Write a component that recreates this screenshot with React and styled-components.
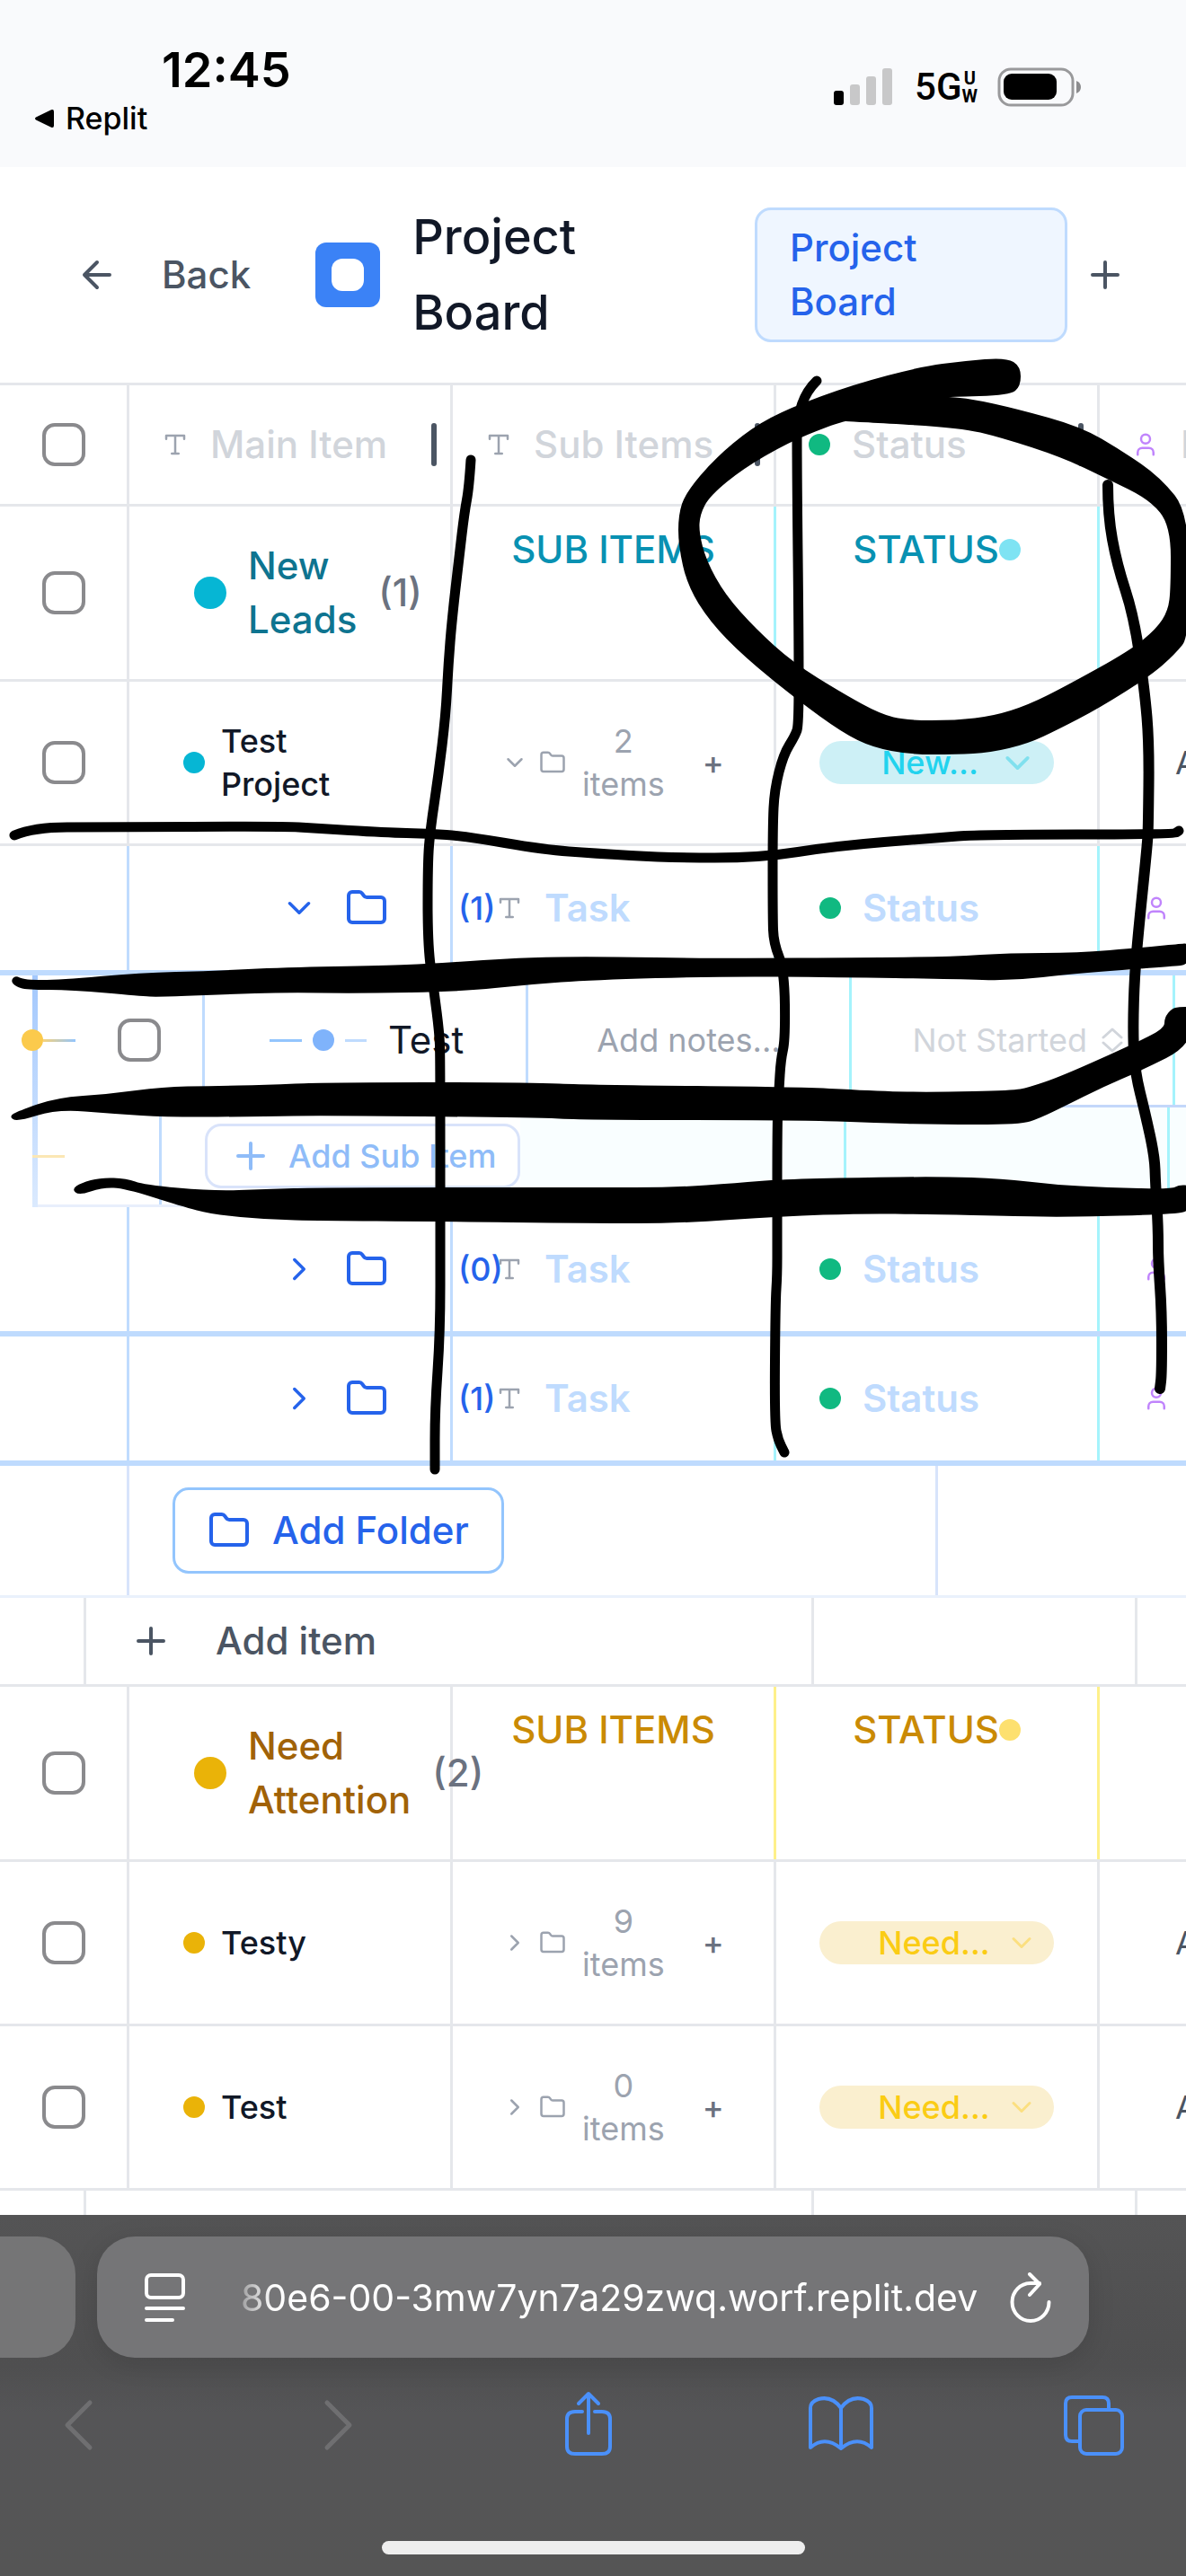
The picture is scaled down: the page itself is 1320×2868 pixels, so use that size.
import React from "react";
import styled, { createGlobalStyle } from "styled-components";

const GlobalStyle = createGlobalStyle`
  * { box-sizing: border-box; }
  body { margin: 0; background: #fff; font-family: Inter, "Liberation Sans", sans-serif; }
  button, input, select { font-family: inherit; }
`;

const c = {
  ink: "#111827",
  slate: "#4b5563",
  gray: "#6b7280",
  muted: "#9ca3af",
  pale: "#d1d5db",
  line: "#e5e7eb",
  blue: "#2563eb",
  sky: "#bfdbfe",
  cyan: "#a5f3fc",
};

const groups = {
  cyan: { name: "#0e7490", label: "#0891b2", dot: "#06b6d4", soft: "#7ee3f3", line: "#a5f3fc", pill: "#cdf0f6", pillText: "#22d3ee", caret: "#80e0ee" },
  gold: { name: "#a16207", label: "#ca8a04", dot: "#eab308", soft: "#fde06f", line: "#fef08a", pill: "#faefcf", pillText: "#facc15", caret: "#fbdf80" },
};

/* ---------- shell ---------- */

const Screen = styled.div`
  position: relative;
  display: flex;
  flex-direction: column;
  height: 100vh;
  overflow: hidden;
  background: #fff;
`;

const StatusBar = styled.div`
  display: flex;
  justify-content: space-between;
  align-items: flex-start;
  padding: 48px 116px 30px 38px;
  background: #f9fafc;
  color: #000;
`;

const ClockColumn = styled.div`
  display: flex;
  flex-direction: column;
`;

const Clock = styled.time`
  margin-left: 142px;
  font-size: 54px;
  font-weight: 600;
  line-height: 60px;
`;

const ReturnLink = styled.a`
  display: flex;
  align-items: center;
  gap: 12px;
  color: inherit;
  font-size: 34px;
  font-weight: 500;
  line-height: 48px;
  text-decoration: none;
`;

const Indicators = styled.div`
  display: flex;
  align-items: center;
  height: 44px;
  margin-top: 27px;
`;

const Network = styled.span`
  display: flex;
  align-items: center;
  margin: 0 22px 0 24px;
  font-family: Roboto, sans-serif;
  font-size: 42px;
  font-weight: 500;
  line-height: 44px;
`;

const NetworkTag = styled.span`
  display: flex;
  flex-direction: column;
  align-items: center;
  font-size: 20px;
  font-weight: 700;
  line-height: 20px;
`;

const Header = styled.header`
  display: flex;
  align-items: center;
  padding: 45px 66px 45px 84px;
  border-bottom: 3px solid ${c.line};
`;

const BackButton = styled.button`
  display: flex;
  align-items: center;
  gap: 48px;
  margin-right: 72px;
  padding: 0;
  border: 0;
  background: none;
  color: ${c.slate};
  font-size: 42px;
  font-weight: 500;
  line-height: 60px;
`;

const BoardBadge = styled.span`
  display: grid;
  place-items: center;
  width: 72px;
  height: 72px;
  border-radius: 12px;
  background: #3b82f6;
  &::after {
    content: "";
    width: 36px;
    height: 36px;
    border-radius: 12px;
    background: #fff;
  }
`;

const Title = styled.h1`
  width: min-content;
  margin: -9px auto -9px 36px;
  color: ${c.ink};
  font-size: 54px;
  font-weight: 500;
  line-height: 84px;
`;

const BoardTab = styled.button`
  flex: 0 0 348px;
  margin-right: 18px;
  padding: 12px 36px;
  border: 3px solid ${c.sky};
  border-radius: 18px;
  background: #eff6ff;
  color: ${c.blue};
  font-size: 42px;
  font-weight: 500;
  line-height: 60px;
  text-align: left;
`;

const Wrapped = styled.span`
  display: block;
  width: min-content;
`;

const IconButton = styled.button`
  display: grid;
  place-items: center;
  padding: 0;
  border: 0;
  background: none;
  color: ${(p) => p.$color || c.slate};
`;

/* ---------- table ---------- */

const Scroller = styled.main`
  flex: 1;
  min-height: 0;
  overflow: hidden;
`;

const Table = styled.table`
  display: block;
  width: max-content;
  min-width: 100%;
  border-spacing: 0;
  font-size: 42px;
  font-weight: 500;
  line-height: 60px;
`;

const Body = styled.tbody`
  display: block;
`;

const Row = styled.tr`
  display: flex;
  height: ${(p) => p.$height}px;
  margin-left: ${(p) => p.$indent || 0}px;
  border-bottom: ${(p) => p.$weight || 3}px solid ${(p) => p.$line || c.line};
`;

const Cell = styled.td`
  display: flex;
  flex: 0 0 ${(p) => p.$width || 360}px;
  min-width: 0;
  align-items: ${(p) => p.$align || "center"};
  justify-content: ${(p) => p.$justify || "flex-start"};
  gap: ${(p) => p.$gap || 0}px;
  padding: ${(p) => p.$pad || "0"};
  border-right: 3px solid ${(p) => p.$line || c.line};
  background: ${(p) => p.$tint || "transparent"};
  color: ${(p) => p.$color || "inherit"};
  white-space: nowrap;
`;

const HeadCell = styled(Cell).attrs({ as: "th", scope: "col" })`
  position: relative;
  font-weight: 500;
`;

const ResizeGrip = styled.span`
  position: absolute;
  top: 42px;
  right: 15px;
  width: 6px;
  height: 48px;
  border-radius: 3px;
  background: ${c.slate};
`;

const Checkbox = styled.input.attrs({ type: "checkbox" })`
  appearance: none;
  width: 48px;
  height: 48px;
  margin: 0;
  border: 4px solid #8a8a8d;
  border-radius: 14px;
  background: #fff;
`;

const Dot = styled.span`
  flex: none;
  width: ${(p) => p.$size || 24}px;
  height: ${(p) => p.$size || 24}px;
  border-radius: 50%;
  background: ${(p) => p.$color};
`;

const DotSlot = styled.span`
  display: flex;
  align-items: center;
  height: 60px;
`;

const GroupName = styled.span`
  width: min-content;
  white-space: normal;
  color: ${(p) => p.$color};
`;

const ItemName = styled(GroupName)`
  font-size: 36px;
  line-height: 48px;
`;

const GroupCount = styled.span`
  color: ${c.gray};
`;

const FolderGap = styled.span`
  flex: 0 0 30px;
`;

const FolderCount = styled.span`
  flex: none;
  margin-left: 78px;
  font-size: 36px;
  line-height: 48px;
`;

const FolderHead = styled.span`
  font-weight: 600;
`;

const ItemCount = styled.span`
  width: min-content;
  margin: 0 30px 0 6px;
  color: ${c.muted};
  font-size: 36px;
  font-weight: 400;
  line-height: 48px;
  text-align: center;
  white-space: normal;
`;

const PlainButton = styled.button`
  padding: 0;
  border: 0;
  background: none;
  color: ${c.gray};
  font-size: 36px;
  font-weight: 500;
  line-height: 48px;
`;

const Pill = styled.label`
  display: flex;
  flex: 1;
  align-items: center;
  height: 48px;
  padding: 0 18px 0 48px;
  border-radius: 24px;
  background: ${(p) => p.$tone.pill};
  color: ${(p) => p.$tone.caret};
`;

const PillSelect = styled.select`
  appearance: none;
  flex: 1;
  min-width: 0;
  padding: 0;
  border: 0;
  background: none;
  color: ${(p) => p.$color};
  font-size: 36px;
  font-weight: 500;
  line-height: 48px;
  text-align: center;
`;

const StateLabel = styled.label`
  display: flex;
  align-items: center;
  gap: 15px;
  margin-left: 12px;
  color: ${c.pale};
`;

const StateSelect = styled.select`
  appearance: none;
  padding: 0;
  border: 0;
  background: none;
  color: inherit;
  font-size: 36px;
  line-height: 48px;
`;

const NotesInput = styled.input`
  width: 100%;
  padding: 0;
  border: 0;
  background: none;
  font-size: 36px;
  line-height: 48px;
  text-align: center;
  &::placeholder { color: ${c.muted}; opacity: 1; }
`;

const Assignee = styled.span`
  color: ${c.slate};
  font-size: 36px;
  font-weight: 400;
`;

const SubRows = styled(Body)`
  position: relative;
`;

const GuideLine = styled.tr`
  position: absolute;
  top: 0;
  left: 36px;
  width: 6px;
  height: 100%;
  background: linear-gradient(#a3c8fd, #dbeafe);
`;

const Marker = styled.span`
  position: absolute;
  top: ${(p) => p.$top}px;
  left: ${(p) => p.$left}px;
  display: flex;
  align-items: center;
`;

const Dash = styled.span`
  width: ${(p) => p.$width}px;
  height: 3px;
  background: ${(p) => p.$color};
`;

const SubTitle = styled.span`
  margin-left: 12px;
  color: ${c.ink};
  font-weight: 400;
`;

const OutlineButton = styled.button`
  display: flex;
  flex: none;
  align-items: center;
  gap: ${(p) => (p.$small ? 18 : 24)}px;
  height: ${(p) => (p.$small ? 72 : 96)}px;
  padding: 0 ${(p) => (p.$small ? 24 : 36)}px;
  border: 3px solid ${(p) => (p.$small ? "#d9e3fa" : "#93c5fd")};
  border-radius: 18px;
  background: #fff;
  color: ${(p) => (p.$small ? "#8fbcf8" : c.blue)};
  font-size: ${(p) => (p.$small ? 36 : 42)}px;
  font-weight: 500;
  line-height: 48px;
  white-space: nowrap;
`;

const AddItemButton = styled.button`
  display: flex;
  align-items: center;
  gap: 48px;
  padding: 0;
  border: 0;
  background: none;
  color: ${c.slate};
  font-size: 42px;
  font-weight: 500;
  line-height: 60px;
`;

/* ---------- browser chrome ---------- */

const BrowserBar = styled.footer`
  display: flex;
  flex-direction: column;
  padding: 24px 0;
  background: linear-gradient(#545455, #4f4f50 42%, #555557 55%, #555555);
  color: #fff;
`;

const AddressRow = styled.div`
  display: flex;
  gap: 24px;
  padding-right: 108px;
`;

const PreviousTab = styled.div`
  flex: 0 0 84px;
  border-radius: 0 42px 42px 0;
  background: #757576;
`;

const AddressBar = styled.form`
  display: flex;
  flex: 1;
  align-items: center;
  min-width: 0;
  height: 135px;
  padding: 0 42px 0 52px;
  border-radius: 42px;
  background: #757577;
  box-shadow: 0 6px 30px rgba(0, 0, 0, 0.12);
`;

const Address = styled.input`
  flex: 1;
  min-width: 0;
  margin: 0 30px 0 60px;
  padding: 0;
  border: 0;
  background: none;
  color: #fff;
  font-size: 41px;
  line-height: 60px;
  mask-image: linear-gradient(90deg, rgba(0, 0, 0, 0.3), #000 36px);
`;

const Toolbar = styled.nav`
  display: flex;
  justify-content: space-between;
  padding: 36px 63px 0 48px;
`;

const HomeIndicator = styled.div`
  width: 471px;
  height: 15px;
  margin: 90px auto 0;
  border-radius: 8px;
  background: #eee;
`;

const InkLayer = styled.svg`
  position: absolute;
  top: 0;
  left: 0;
  width: 100%;
  height: auto;
  pointer-events: none;
`;

/* ---------- icons ---------- */

const IconSvg = styled.svg`
  flex: none;
`;

const Icon = ({ size = 48, stroke = 2, box = "0 0 24 24", children, ...rest }) => (
  <IconSvg width={size} height={size} viewBox={box} fill="none" stroke="currentColor" strokeWidth={stroke} strokeLinecap="round" strokeLinejoin="round" aria-hidden="true" {...rest}>
    {children}
  </IconSvg>
);
const PlusIcon = () => <Icon><path d="M5 12h14M12 5v14" /></Icon>;
const FolderIcon = (p) => (
  <Icon {...p}><path d="M20 20a2 2 0 0 0 2-2V8a2 2 0 0 0-2-2h-7.9a2 2 0 0 1-1.69-.9L9.6 3.9A2 2 0 0 0 7.93 3H4a2 2 0 0 0-2 2v13a2 2 0 0 0 2 2Z" /></Icon>
);
const Chevron = ({ open, ...p }) => <Icon {...p}><path d={open ? "m6 9 6 6 6-6" : "m9 18 6-6-6-6"} /></Icon>;
const TypeIcon = () => <Icon size={30} color={c.muted}><path d="M4 7V4h16v3M9 20h6M12 4v16" /></Icon>;
const PersonIcon = () => (
  <Icon size={30} color="#c084fc"><path d="M19 21v-2a4 4 0 0 0-4-4H9a4 4 0 0 0-4 4v2" /><circle cx="12" cy="7" r="4" /></Icon>
);

/* ---------- pen strokes ---------- */

function smooth(flat, closed) {
  const pts = [];
  for (let i = 0; i < flat.length; i += 2) pts.push([flat[i], flat[i + 1]]);
  const mid = (a, b) => `${(a[0] + b[0]) / 2} ${(a[1] + b[1]) / 2}`;
  if (closed) {
    let d = `M${mid(pts[pts.length - 1], pts[0])}`;
    pts.forEach((p, i) => { d += `Q${p[0]} ${p[1]} ${mid(p, pts[(i + 1) % pts.length])}`; });
    return `${d}Z`;
  }
  let d = `M${pts[0][0]} ${pts[0][1]}`;
  for (let i = 1; i < pts.length - 1; i++) d += `Q${pts[i][0]} ${pts[i][1]} ${mid(pts[i], pts[i + 1])}`;
  const end = pts[pts.length - 1];
  return `${d}L${end[0]} ${end[1]}`;
}

const thinStrokes = [
  [524, 512, 522, 543, 517, 570, 511, 620, 503, 690, 499, 740, 496, 797, 488, 863, 479, 923, 476, 960, 476, 1053, 483, 1103, 489, 1150, 490, 1177, 490, 1380, 490, 1483, 484, 1570, 484, 1636],
  [909, 424, 887, 445, 887, 528, 889, 710, 889, 807, 885, 819, 872, 840, 862, 879, 860, 920, 860, 1020, 861, 1050, 873, 1080, 874, 1157, 869, 1180, 867, 1213, 865, 1247, 865, 1380, 865, 1420, 863, 1450, 862, 1583, 866, 1603, 873, 1617],
  [1233, 540, 1233, 573, 1243, 628, 1262, 686, 1274, 769, 1279, 828, 1278, 920, 1277, 940, 1266, 1047, 1262, 1100, 1261, 1160, 1264, 1197, 1274, 1237, 1285, 1287, 1286, 1317, 1289, 1367, 1289, 1403, 1293, 1460, 1293, 1530, 1291, 1546],
  [16, 930, 38, 921, 111, 921, 316, 920, 349, 922, 429, 927, 476, 928, 518, 931, 606, 946, 660, 950, 744, 955, 847, 955, 929, 942, 1039, 933, 1093, 929, 1306, 929, 1312, 925],
];

const broadStrokes = [
  [12, 1092, 17, 1086, 27, 1091, 67, 1091, 156, 1083, 236, 1081, 316, 1077, 429, 1075, 476, 1073, 539, 1069, 589, 1066, 660, 1065, 799, 1067, 976, 1066, 1060, 1065, 1123, 1061, 1199, 1061, 1270, 1055, 1312, 1051, 1324, 1050, 1324, 1074, 1304, 1076, 1194, 1084, 1127, 1092, 1060, 1090, 933, 1088, 799, 1087, 660, 1091, 589, 1096, 513, 1104, 400, 1106, 316, 1105, 252, 1107, 177, 1110, 156, 1109, 80, 1102, 29, 1102, 17, 1098],
  [10, 1243, 20, 1237, 63, 1222, 122, 1218, 181, 1210, 236, 1209, 295, 1208, 362, 1205, 585, 1205, 660, 1208, 891, 1210, 980, 1215, 1039, 1216, 1127, 1214, 1144, 1211, 1182, 1198, 1262, 1162, 1296, 1145, 1296, 1133, 1304, 1123, 1312, 1121, 1326, 1121, 1326, 1164, 1270, 1192, 1228, 1210, 1186, 1231, 1157, 1245, 1136, 1252, 1039, 1252, 976, 1250, 887, 1247, 660, 1247, 585, 1244, 358, 1242, 295, 1243, 189, 1244, 126, 1240, 63, 1235, 19, 1249],
  [80, 1324, 90, 1317, 112, 1311, 141, 1312, 160, 1319, 236, 1326, 295, 1324, 358, 1322, 660, 1322, 753, 1322, 820, 1317, 870, 1313, 955, 1311, 1047, 1310, 1115, 1312, 1173, 1319, 1232, 1322, 1304, 1324, 1312, 1319, 1326, 1320, 1326, 1347, 1308, 1352, 1186, 1355, 1136, 1354, 1030, 1352, 963, 1351, 870, 1354, 757, 1362, 660, 1362, 480, 1360, 358, 1359, 299, 1358, 236, 1352, 202, 1343, 139, 1323, 114, 1322, 88, 1331],
];

const loopOuter = [1072, 402, 1120, 398, 1136, 408, 1136, 430, 1124, 440, 1056, 442, 1056, 442, 1081, 444, 1131, 455, 1203, 475, 1249, 502, 1291, 531, 1324, 572, 1324, 708, 1308, 728, 1281, 752, 1224, 788, 1178, 812, 1144, 828, 1102, 838, 1064, 840, 1013, 840, 971, 832, 938, 816, 887, 779, 828, 731, 790, 692, 765, 652, 755, 607, 755, 573, 763, 549, 795, 511, 837, 476, 879, 454, 950, 428, 1026, 408];
const loopInner = [942, 469, 1068, 476, 1114, 487, 1182, 509, 1232, 533, 1279, 556, 1303, 585, 1303, 655, 1300, 680, 1287, 700, 1258, 724, 1186, 764, 1144, 785, 1106, 797, 1064, 802, 1009, 802, 980, 795, 938, 772, 883, 738, 841, 700, 807, 662, 786, 624, 778, 593, 779, 573, 790, 552, 828, 521, 879, 492, 921, 475, 940, 469];

const PenMarks = () => (
  <InkLayer viewBox="0 0 1320 2868" aria-hidden="true">
    {thinStrokes.map((s, i) => (
      <path key={i} d={smooth(s)} fill="none" stroke="#000" strokeWidth={i === 2 ? 12 : 11} strokeLinecap="round" strokeLinejoin="round" />
    ))}
    {broadStrokes.map((s, i) => <path key={i} d={smooth(s, true)} />)}
    <path fillRule="evenodd" d={smooth(loopOuter, true) + smooth(loopInner, true)} />
  </InkLayer>
);

/* ---------- rows ---------- */

const CheckCell = ({ label, line, as }) => (
  <Cell as={as} $width={144} $justify="center" $line={line}>
    <Checkbox aria-label={label} />
  </Cell>
);

const ColumnHeads = () => (
  <Row $height={135}>
    <CheckCell label="Select all" as="th" />
    <HeadCell $pad="0 36px" $gap={24} $color={c.pale}><TypeIcon />Main Item<ResizeGrip /></HeadCell>
    <HeadCell $pad="0 36px" $gap={24} $color={c.pale}><TypeIcon />Sub Items<ResizeGrip /></HeadCell>
    <HeadCell $pad="0 36px" $gap={24} $color={c.pale}><Dot $color="#10b981" />Status<ResizeGrip /></HeadCell>
    <HeadCell $pad="0 36px" $gap={24} $color={c.pale}><PersonIcon />People</HeadCell>
  </Row>
);

const GroupRow = ({ tone, name, count }) => (
  <Row $height={195}>
    <CheckCell label={`Select ${name}`} />
    <Cell $pad="0 0 0 72px" $gap={24}>
      <Dot $size={36} $color={tone.dot} />
      <GroupName $color={tone.name}>{name}</GroupName>
      <GroupCount>({count})</GroupCount>
    </Cell>
    <Cell $align="flex-start" $justify="center" $pad="18px 0" $line={tone.line} $color={tone.label}>SUB ITEMS</Cell>
    <Cell $align="flex-start" $justify="center" $pad="18px 0" $line={tone.line} $color={tone.label}>
      STATUS
      <DotSlot><Dot $color={tone.soft} /></DotSlot>
    </Cell>
    <Cell $line={tone.line} />
  </Row>
);

const ItemRow = ({ tone, name, count, open, status, caret = 36 }) => (
  <Row $height={183}>
    <CheckCell label={`Select ${name}`} />
    <Cell $pad="0 0 0 60px" $gap={18}>
      <Dot $color={tone.dot} />
      <ItemName $color={c.ink}>{name}</ItemName>
    </Cell>
    <Cell $pad="0 0 0 54px" $gap={12} $color={c.muted}>
      <Chevron open={open} size={30} />
      <FolderIcon size={30} />
      <ItemCount>{count} items</ItemCount>
      <PlainButton aria-label="Add sub item">+</PlainButton>
    </Cell>
    <Cell $pad="0 48px">
      <Pill $tone={tone}>
        <PillSelect $color={tone.pillText} aria-label="Status"><option>{status}</option></PillSelect>
        <Chevron open size={caret} />
      </Pill>
    </Cell>
    <Cell $pad="0 0 0 84px"><Assignee>Assign</Assignee></Cell>
  </Row>
);

const FolderRow = ({ count, open }) => (
  <Row $height={144} $weight={6} $line={c.sky}>
    <Cell $width={144} $line={c.sky} />
    <Cell $pad="0 0 0 168px" $line={c.sky} $color={c.blue}>
      <Chevron open={open} size={42} />
      <FolderGap />
      <FolderIcon />
      <FolderCount>({count})</FolderCount>
    </Cell>
    <Cell $pad="0 48px" $gap={24} $line={c.cyan} $color={c.sky}><TypeIcon /><FolderHead>Task</FolderHead></Cell>
    <Cell $pad="0 48px" $gap={24} $line={c.cyan} $color={c.sky}><Dot $color="#10b981" /><FolderHead>Status</FolderHead></Cell>
    <Cell $pad="0 48px" $gap={24} $line={c.cyan} $color={c.sky}><PersonIcon /></Cell>
  </Row>
);

const AddItemRow = () => (
  <Row $height={99}>
    <Cell $width={96} />
    <Cell $width={810} $pad="0 0 0 48px"><AddItemButton><PlusIcon />Add item</AddItemButton></Cell>
    <Cell />
    <Cell />
  </Row>
);

export default function App() {
  return (
    <Screen>
      <GlobalStyle />
      <StatusBar>
        <ClockColumn>
          <Clock>12:45</Clock>
          <ReturnLink href="#replit">
            <svg width="23" height="22" viewBox="0 0 23 22" aria-hidden="true"><path d="M2 9.5 19 1.2q3-1 3 2v15.600q0 3-3 2L2 12.500q-2-1.500 0-3Z" /></svg>
            Replit
          </ReturnLink>
        </ClockColumn>
        <Indicators>
          <svg width="66" height="42" viewBox="0 0 66 42" aria-hidden="true">
            <rect x="0" y="25" width="11" height="16" rx="3" />
            <rect x="18" y="18" width="11" height="23" rx="3" fill="#c8c8c9" />
            <rect x="36" y="9" width="11" height="32" rx="3" fill="#c8c8c9" />
            <rect x="54" y="0" width="11" height="41" rx="3" fill="#c8c8c9" />
          </svg>
          <Network>5G<NetworkTag><span>U</span><span>W</span></NetworkTag></Network>
          <svg width="94" height="44" viewBox="0 0 94 44" aria-hidden="true">
            <rect x="2" y="2" width="82" height="40" rx="13" fill="none" stroke="#99999b" strokeWidth="3" />
            <rect x="7" y="7" width="59" height="29" rx="9" />
            <path d="M88 15q5 2 5 7t-5 7Z" fill="#8c8c8e" />
          </svg>
        </Indicators>
      </StatusBar>

      <Header>
        <BackButton>
          <Icon><path d="m12 19-7-7 7-7M19 12H5" /></Icon>
          Back
        </BackButton>
        <BoardBadge />
        <Title>Project Board</Title>
        <BoardTab><Wrapped>Project Board</Wrapped></BoardTab>
        <IconButton aria-label="Add board"><PlusIcon /></IconButton>
      </Header>

      <Scroller>
        <Table>
          <Body>
            <ColumnHeads />
            <GroupRow tone={groups.cyan} name="New Leads" count={1} />
            <ItemRow tone={groups.cyan} name="Test Project" count={2} open status="New..." caret={45} />
            <FolderRow count={1} open />
          </Body>
          <SubRows>
            <GuideLine />
            <Row $height={147} $indent={84} $line="#c3d7fa">
              <Cell $width={144} $justify="center" $line={c.sky}>
                <Marker $top={60} $left={24}>
                  <Dot $color="#fbca4c" />
                  <Dash $width={36} $color="linear-gradient(90deg, #f5d27c, #93c5fd)" />
                </Marker>
                <Checkbox aria-label="Select Test" />
              </Cell>
              <Cell $pad="0 0 0 72px" $gap={12} $line={c.sky}>
                <Dash $width={36} $color="#93c5fd" />
                <Dot $color="#7fb3fb" />
                <Dash $width={24} $color={c.sky} />
                <SubTitle>Test</SubTitle>
              </Cell>
              <Cell $line={c.cyan}><NotesInput aria-label="Notes" placeholder="Add notes..." /></Cell>
              <Cell $justify="center" $line={c.cyan}>
                <StateLabel>
                  <StateSelect aria-label="State"><option>Not Started</option></StateSelect>
                  <svg width="24" height="28" viewBox="0 0 24 28" fill="none" stroke="currentColor" strokeWidth="3" strokeLinecap="round" strokeLinejoin="round" aria-hidden="true"><path d="M2 11 12 2l10 9M2 17l10 9 10-9" /></svg>
                </StateLabel>
              </Cell>
              <Cell $line={c.cyan} />
            </Row>
            <Row $height={111} $indent={36} $line="#e8effc">
              <Cell $width={144} $line={c.sky}>
                <Marker $top={200} $left={36}><Dash $width={36} $color="#fbe7b4" /></Marker>
              </Cell>
              <Cell $width={402} $pad="0 0 0 48px" $line="#f9feff">
                <OutlineButton $small><PlusIcon />Add Sub Item</OutlineButton>
              </Cell>
              <Cell $tint="#f9feff" $line={c.cyan} />
              <Cell $tint="#f9feff" $line={c.cyan} />
              <Cell $tint="#f9feff" $line={c.cyan} />
            </Row>
          </SubRows>
          <Body>
            <FolderRow count={0} />
            <FolderRow count={1} />
            <Row $height={147} $line="#eaf1fc">
              <Cell $width={144} $line="#d8e4fb" />
              <Cell $width={900} $pad="0 0 0 48px" $line="#d8e4fb">
                <OutlineButton><FolderIcon />Add Folder</OutlineButton>
              </Cell>
              <Cell $line="#d8e4fb" />
            </Row>
            <AddItemRow />
            <GroupRow tone={groups.gold} name="Need Attention" count={2} />
            <ItemRow tone={groups.gold} name="Testy" count={9} status="Need..." />
            <ItemRow tone={groups.gold} name="Test" count={0} status="Need..." />
            <AddItemRow />
          </Body>
        </Table>
      </Scroller>

      <BrowserBar>
        <AddressRow>
          <PreviousTab />
          <AddressBar>
            <svg width="48" height="56" viewBox="0 0 48 56" fill="none" stroke="currentColor" strokeWidth="4" strokeLinecap="round" aria-hidden="true">
              <rect x="3" y="3" width="41" height="25" rx="5" />
              <path d="M3 40h41M3 53h29" />
            </svg>
            <Address aria-label="Address" defaultValue="80e6-00-3mw7yn7a29zwq.worf.replit.dev" />
            <IconButton type="button" aria-label="Reload" $color="#fff">
              <svg width="46" height="56" viewBox="0 0 46 56" fill="none" stroke="currentColor" strokeWidth="4" strokeLinecap="round" strokeLinejoin="round" aria-hidden="true">
                <path d="M43.500 33A20.500 21 0 1 1 23 12h10M22 2l11 11-11 12" />
              </svg>
            </IconButton>
          </AddressBar>
        </AddressRow>
        <Toolbar>
          <IconButton aria-label="Back" $color="#6f6f71">
            <Icon size={78} box="0 0 78 78" stroke={5}><path d="M52 14 27 39l25 25" /></Icon>
          </IconButton>
          <IconButton aria-label="Forward" $color="#6f6f71">
            <Icon size={78} box="0 0 78 78" stroke={5}><path d="m33 14 25 25-25 25" /></Icon>
          </IconButton>
          <IconButton aria-label="Share" $color="#4a90fa">
            <Icon size={78} box="0 0 78 78" stroke={4}><path d="M34 24h-8q-9 0-9 8v31q0 8 9 8h30q9 0 9-8V32q0-8-9-8h-8M41 48V5M30 15 41 4l11 11" /></Icon>
          </IconButton>
          <IconButton aria-label="Bookmarks" $color="#4a90fa">
            <Icon size={78} box="0 0 78 78" stroke={4}><path d="M40 20Q30 6 15 10 6 13 6 20v44q16-14 34 1 18-15 34-1V20q0-7-9-10Q50 6 40 20v45" /></Icon>
          </IconButton>
          <IconButton aria-label="Tabs" $color="#4a90fa">
            <Icon size={78} box="0 0 78 78" stroke={4}><path d="M22 57h-8q-7 0-7-7V15q0-7 7-7h34q7 0 7 7v7" /><rect x="23" y="22" width="47" height="49" rx="7" /></Icon>
          </IconButton>
        </Toolbar>
        <HomeIndicator />
      </BrowserBar>
      <PenMarks />
    </Screen>
  );
}
